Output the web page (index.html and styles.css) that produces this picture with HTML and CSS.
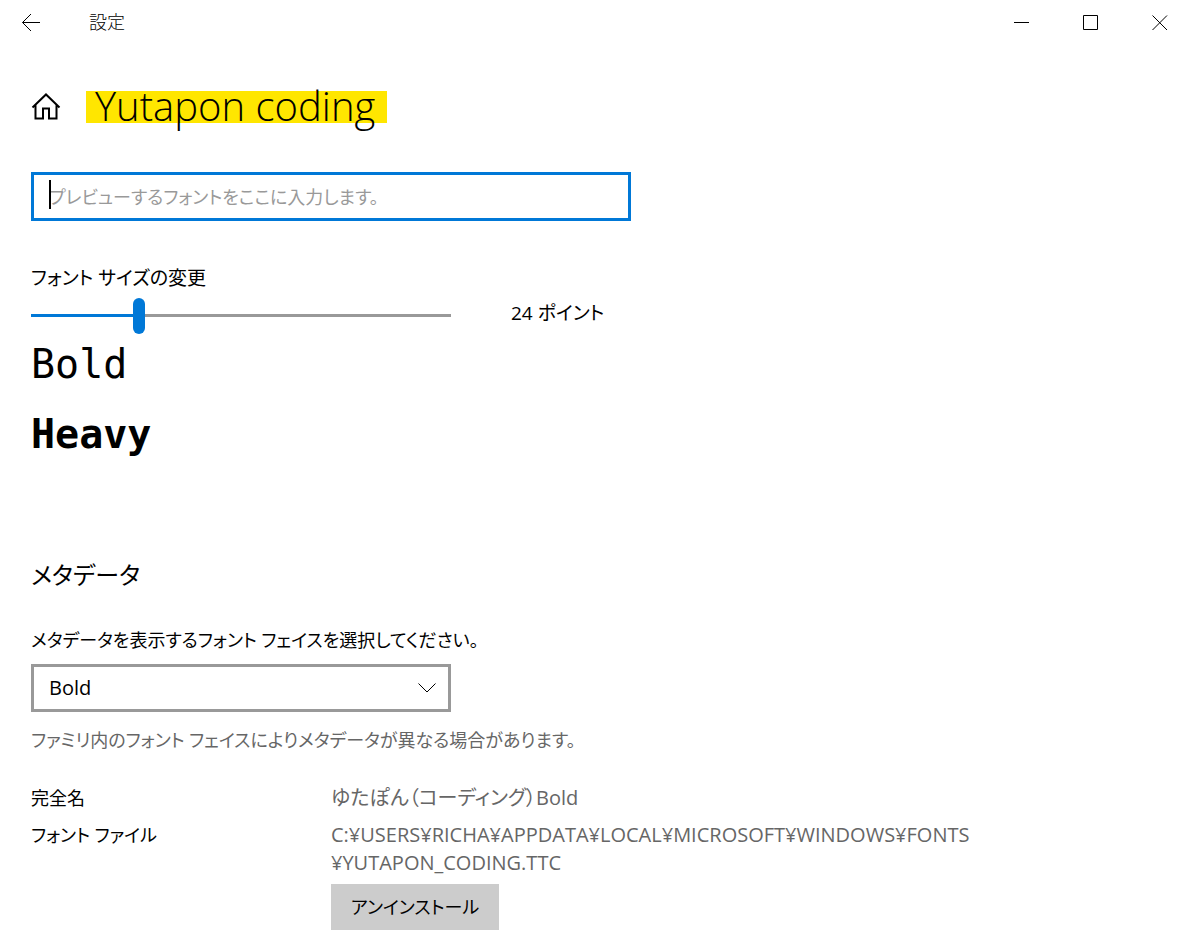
FILE: index.html
```html
<!DOCTYPE html>
<html lang="ja">
<head>
    <meta charset="UTF-8">
    <meta name="viewport" content="width=device-width, initial-scale=1.0">
    <title>設定</title>
    <link rel="stylesheet" href="styles.css">
</head>
<body>
    <header class="titlebar">
        <button class="back-btn" aria-label="戻る">
            <svg width="20" height="20" viewBox="0 0 20 20"><path d="M19 10.5H1.5M10 2L1.5 10.5L10 19"/></svg>
        </button>
        <span class="app-name">設定</span>
        <div class="window-buttons">
            <button class="window-btn" aria-label="最小化">
                <svg width="16" height="16" viewBox="0 0 16 16"><path d="M0 8.5H15"/></svg>
            </button>
            <button class="window-btn" aria-label="最大化">
                <svg width="16" height="16" viewBox="0 0 16 16"><path d="M.5 1.5H14.5V15.5H.5Z"/></svg>
            </button>
            <button class="window-btn" aria-label="閉じる">
                <svg width="16" height="16" viewBox="0 0 16 16"><path d="M.5 1.5L15 16M15 1.5L.5 16"/></svg>
            </button>
        </div>
    </header>

    <main class="content">
        <div class="page-head">
            <a class="home-link" href="#" aria-label="ホーム">
                <svg width="30" height="30" viewBox="0 0 30 30"><path d="M1.5 16.5L15 3.5L28.5 16.5M4.5 14V27.5H12V17.5H18V27.5H25.5V14"/></svg>
            </a>
            <h1><mark>Yutapon coding</mark></h1>
        </div>

        <div class="preview-box">
            <input type="text" class="preview-input" aria-label="プレビュー" placeholder="プレビューするフォントをここに入力します。">
            <span class="caret"></span>
        </div>

        <label class="size-label" for="size">フォント サイズの変更</label>
        <div class="size-row">
            <input type="range" class="size-slider" id="size" min="0" max="100" value="25">
            <output class="size-value" for="size">24 ポイント</output>
        </div>

        <div class="sample">Bold</div>
        <div class="sample heavy">Heavy</div>

        <h2>メタデータ</h2>
        <label class="face-label" for="face">メタデータを表示するフォント フェイスを選択してください。</label>
        <div class="select-box">
            <select class="face-select" id="face">
                <option>Bold</option>
                <option>Heavy</option>
            </select>
            <svg class="chevron" width="18" height="12" viewBox="0 0 18 12"><path d="M.5 1.5L9 10L17.5 1.5"/></svg>
        </div>
        <p class="note">ファミリ内のフォント フェイスによりメタデータが異なる場合があります。</p>

        <dl class="meta">
            <dt>完全名</dt>
            <dd>ゆたぽん（コーディング）Bold</dd>
            <dt>フォント ファイル</dt>
            <dd>
                C:¥USERS¥RICHA¥APPDATA¥LOCAL¥MICROSOFT¥WINDOWS¥FONTS<br>¥YUTAPON_CODING.TTC
                <button class="uninstall-btn">アンインストール</button>
            </dd>
        </dl>
    </main>
</body>
</html>
```

FILE: styles.css
```css
* {
    box-sizing: border-box;
}
body {
    margin: 0;
    background-color: white;
    color: black;
    font-family: "Open Sans", "Noto Sans CJK JP", sans-serif;
    font-size: 18px;
    line-height: 28px;
    font-feature-settings: "palt";
}
button, input, select {
    font: inherit;
    font-feature-settings: inherit;
    color: inherit;
}
svg {
    display: block;
    fill: none;
    stroke: black;
}
.titlebar {
    display: flex;
    align-items: center;
    height: 44px;
    padding-left: 21px;
}
.back-btn, .window-btn {
    padding: 0;
    border: none;
    background: none;
}
.app-name {
    margin-left: 48px;
    font-weight: 300;
}
.window-buttons {
    display: flex;
    margin-left: auto;
}
.window-btn {
    display: flex;
    align-items: center;
    justify-content: flex-end;
    width: 69px;
    height: 44px;
    padding-right: 17px;
}
.content {
    padding: 34px 31px 10px;
}
.page-head {
    display: flex;
    align-items: center;
    gap: 25px;
    height: 56px;
}
h1 {
    margin: 0;
    font-size: 40px;
    font-weight: 300;
    line-height: 56px;
}
mark {
    padding: 0 12px 0 9px;
    color: inherit;
    background: linear-gradient(#ffe600, #ffe600) center 56% / 100% 32px no-repeat;
}
.home-link svg {
    stroke-width: 2;
}
.preview-box {
    position: relative;
    max-width: 600px;
    margin-top: 38px;
}
.preview-input {
    display: block;
    width: 100%;
    height: 49px;
    padding: 0 15px;
    border: 3px solid #0078d7;
    border-radius: 0;
    outline: none;
}
.preview-input::placeholder {
    color: #999;
}
.caret {
    position: absolute;
    left: 18px;
    top: 8px;
    width: 2px;
    height: 29px;
    background-color: black;
}
.size-label, .face-label {
    display: block;
}
.size-label {
    margin-top: 43px;
}
.size-row {
    display: flex;
    align-items: center;
    gap: 60px;
    height: 44px;
}
.size-slider {
    appearance: none;
    width: 420px;
    height: 36px;
    margin: 4px 0 0;
    background: linear-gradient(to right, #0078d7 25%, #999 25%) 0 16px / 100% 3px no-repeat;
}
.size-slider::-webkit-slider-thumb {
    appearance: none;
    width: 12px;
    height: 36px;
    border-radius: 6px;
    background-color: #0078d7;
}
.size-label, .size-value {
    font-size: 19px;
}
.size-value {
    padding-bottom: 2px;
}
.sample {
    margin-bottom: 14px;
    font-family: "DejaVu Sans Mono", monospace;
    font-size: 40px;
    line-height: 56px;
}
.heavy {
    font-weight: bold;
}
h2 {
    margin: 93px 0 0;
    font-size: 24px;
    font-weight: 400;
    line-height: 40px;
}
.face-label {
    margin-top: 31px;
}
.select-box {
    position: relative;
    max-width: 420px;
    margin-top: 10px;
}
.face-select {
    appearance: none;
    display: block;
    width: 100%;
    height: 48px;
    padding: 0 15px;
    border: 3px solid #999;
    border-radius: 0;
    background-color: white;
    font-size: 20px;
}
.chevron {
    position: absolute;
    right: 15px;
    top: 18px;
    pointer-events: none;
}
.note {
    margin: 14px 0 0;
    color: #666;
}
.meta {
    display: grid;
    grid-template-columns: 300px 1fr;
    row-gap: 9px;
    margin: 30px 0 0;
}
.meta dd {
    margin: 0;
    color: #666;
    font-size: 20px;
}
.uninstall-btn {
    display: block;
    margin-top: 7px;
    padding: 9px 20px;
    border: none;
    background-color: #ccc;
    color: black;
    font-size: 18px;
}
```
